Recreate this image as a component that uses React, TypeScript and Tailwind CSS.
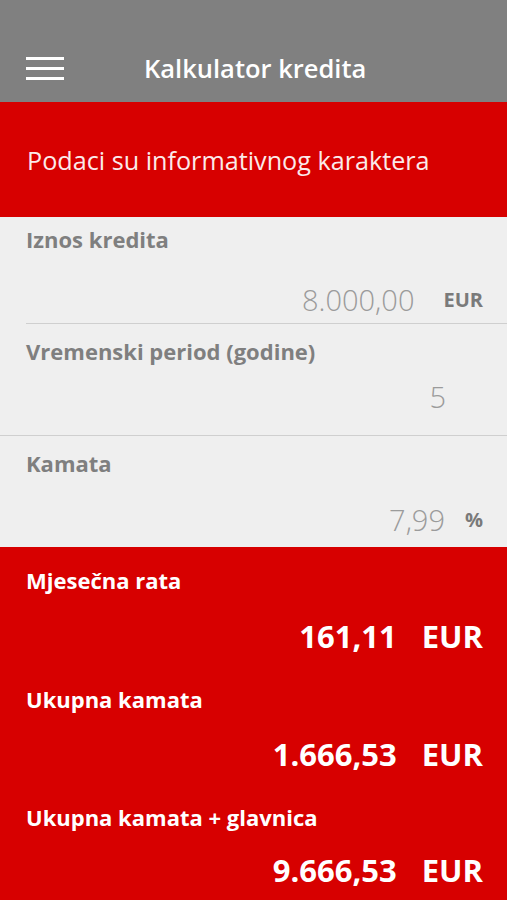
import React from "react";

const font = { fontFamily: '"Open Sans", "Noto Sans", sans-serif' };

function Label({ children, color }: { children: React.ReactNode; color: string }) {
  return <div className={`text-[22px] font-bold leading-[26px] ${color}`}>{children}</div>;
}

function Result({ label, value, pt, gap }: { label: string; value: string; pt: string; gap: string }) {
  return (
    <div className={`flex flex-col pl-[26px] pr-[24px] ${pt}`}>
      <Label color="text-white">{label}</Label>
      <div className={`flex items-center justify-end ${gap} h-[40px]`}>
        <span className="text-[31px] font-bold leading-[40px] text-white">{value}</span>
        <span className="ml-[25px] text-[31px] font-bold leading-[40px] text-white">EUR</span>
      </div>
    </div>
  );
}

export default function App() {
  return (
    <div style={font} className="w-[507px] h-[900px] overflow-hidden bg-[#efefef]">
      <header className="h-[102px] bg-[#808080] flex items-center pt-[34px] px-[26px]">
        <div className="flex flex-col gap-[7px] w-[38px]">
          <div className="h-[3px] bg-white" />
          <div className="h-[3px] bg-white" />
          <div className="h-[3px] bg-white" />
        </div>
        <div className="ml-[80px] text-[25.5px] font-semibold text-white">Kalkulator kredita</div>
      </header>
      <div className="h-[115px] bg-[#d70000] flex items-center pt-[3px] px-[27px]">
        <span className="text-[25.2px] text-[#fbeaea]">Podaci su informativnog karaktera</span>
      </div>
      <div className="h-[330px] bg-[#efefef] flex flex-col">
        <div className="flex flex-col pl-[26px] pr-[24px] pt-[9px] pb-[7px]">
          <Label color="text-[#7f7f7f]">Iznos kredita</Label>
          <div className="flex items-center justify-end mt-[32px] h-[32px]">
            <span className="text-[29px] font-light leading-[32px] text-[#9b9b9b]">8.000,00</span>
            <span className="ml-[29px] text-[20px] font-bold text-[#7a7a7a]">EUR</span>
          </div>
        </div>
        <div className="h-px bg-[#cfcfcf] ml-[26px]" />
        <div className="flex flex-col pl-[26px] pr-[24px] pt-[14px] pb-[22px]">
          <Label color="text-[#7f7f7f]">Vremenski period (godine)</Label>
          <div className="flex items-center justify-end mt-[17px] h-[32px]">
            <span className="mr-[37px] text-[29px] font-light leading-[32px] text-[#9b9b9b]">5</span>
          </div>
        </div>
        <div className="h-px bg-[#cfcfcf]" />
        <div className="flex flex-col pl-[26px] pr-[24px] pt-[14px]">
          <Label color="text-[#7f7f7f]">Kamata</Label>
          <div className="flex items-center justify-end mt-[28px] h-[32px]">
            <span className="text-[29px] font-light leading-[32px] text-[#9b9b9b]">7,99</span>
            <span className="ml-[20px] text-[20px] font-bold text-[#7a7a7a]">%</span>
          </div>
        </div>
      </div>
      <div className="h-[353px] bg-[#d70000] flex flex-col">
        <Result label="Mjesečna rata" value="161,11" pt="pt-[20px]" gap="mt-[23px]" />
        <Result label="Ukupna kamata" value="1.666,53" pt="pt-[30px]" gap="mt-[22px]" />
        <Result label="Ukupna kamata + glavnica" value="9.666,53" pt="pt-[30px]" gap="mt-[20px]" />
      </div>
    </div>
  );
}
